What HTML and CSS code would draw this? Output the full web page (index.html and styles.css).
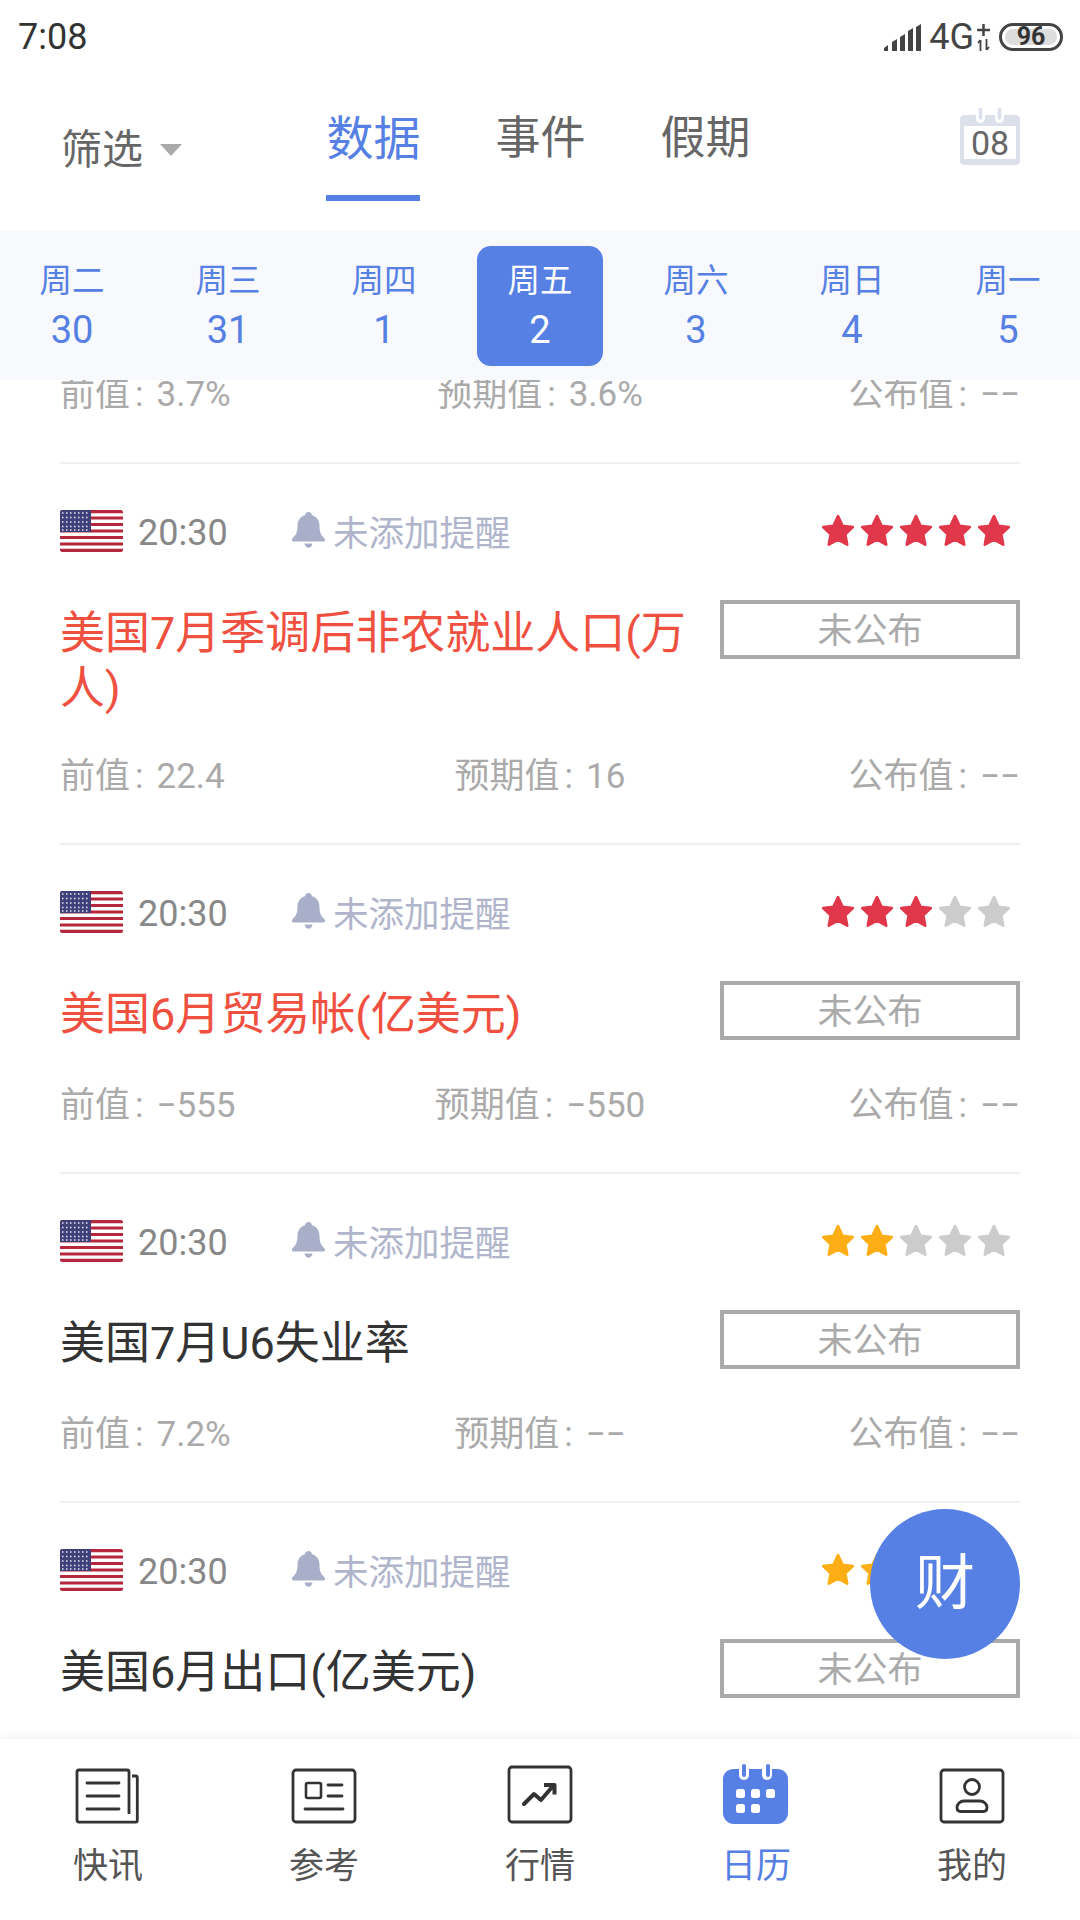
FILE: index.html
```html
<!DOCTYPE html>
<html lang="zh-CN">
<head>
  <meta charset="UTF-8" />
  <meta name="viewport" content="width=device-width, initial-scale=1.0" />
  <title>财经日历</title>
  <link rel="stylesheet" href="styles.css">
</head>
<body>
  <svg class="defs" width="0" height="0">
    <symbol id="star" viewBox="0 0 34 34">
      <path d="M17 3l4.300 9 9.700 1.300-7.100 6.800 1.800 9.800-8.700-4.800-8.700 4.800 1.800-9.800L3 13.300l9.700-1.300z" fill="currentColor" stroke="currentColor" stroke-width="2.500" stroke-linejoin="round"/>
    </symbol>
    <symbol id="bell" viewBox="0 0 33 36">
      <path d="M16.500 0c2 0 3.300 1.300 3.500 3.200 4.700 1.300 7.500 5.300 7.500 10.300 0 5 .6 8.500 3.700 11.500 1.700 1.600 2.200 2.200 1.700 3.400-.3.800-1 1.100-2 1.100H2c-1 0-1.700-.3-2-1.100-.5-1.200 0-1.800 1.700-3.400 3.100-3 3.800-6.500 3.800-11.500S8.300 4.500 13 3.200C13.200 1.300 14.500 0 16.500 0z" fill="currentColor"/>
      <path d="M12.500 31.500h8c-.4 2.700-2 4.200-4 4.200s-3.600-1.500-4-4.200z" fill="currentColor"/>
    </symbol>
    <symbol id="flag" viewBox="0 0 63 42">
      <clipPath id="flag-clip"><rect width="63" height="42" rx="2.500"/></clipPath>
      <g clip-path="url(#flag-clip)">
        <rect width="63" height="42" fill="#fff"/>
        <path d="M0 1.600h63M0 8h63M0 14.500h63M0 21h63M0 27.500h63M0 34h63M0 40.400h63" stroke="#b5273d" stroke-width="3.200"/>
        <rect width="31" height="22" fill="#3f4079"/>
        <path d="M2 3h28M2 7.500h28M2 12h28M2 16.500h28M2 20h28" stroke="#e6e7f2" stroke-width="1.500" stroke-dasharray="1.500 2.500"/>
      </g>
    </symbol>
  </svg>

  <div class="page">
    <div class="statusbar">
      <span class="clock">7:08</span>
      <div class="status-right">
        <svg class="signal" width="38" height="27" viewBox="0 0 38 27">
          <path d="M0 27v-3l4-3v6zM8 27v-9l5-3v12zM16 27V13l5-3v17zM24 27V7l5-3v23zM32 27V3l5-3v27z" fill="#444"/>
        </svg>
        <span class="net">4G</span>
        <svg class="updown" width="13" height="27" viewBox="0 0 13 27">
          <path d="M6.500 0v12M0 6h13" stroke="#444" stroke-width="2.500"/>
          <path d="M3.500 27V16M1 19l2.500-3M9.500 15v11M12 23l-2.500 3" stroke="#444" stroke-width="1.800" fill="none"/>
        </svg>
        <div class="battery"><span class="battery-fill">96</span></div>
      </div>
    </div>

    <header class="topbar">
      <div class="filter">筛选<i class="caret"></i></div>
      <nav class="tabs">
        <a class="tab active">数据</a>
        <a class="tab">事件</a>
        <a class="tab">假期</a>
      </nav>
      <svg class="cal-btn" width="60" height="57" viewBox="0 0 60 57">
        <path d="M4 7h12v3c0 3 2 5 4.500 5S25 13 25 10V7h10v3c0 3 2 5 4.500 5S44 13 44 10V7h12c2 0 4 2 4 4v42c0 2-2 4-4 4H4c-2 0-4-2-4-4V11c0-2 2-4 4-4z" fill="#dbe0ea"/>
        <path d="M20.500 0v10M39.500 0v10" stroke="#dbe0ea" stroke-width="3.500" stroke-linecap="round"/>
        <rect x="4" y="18" width="52" height="33" fill="#fff"/>
        <text x="30" y="47" text-anchor="middle" class="cal-num">08</text>
      </svg>
    </header>

    <div class="week">
      <div class="day"><span class="day-name">周二</span><span class="day-num">30</span></div>
      <div class="day"><span class="day-name">周三</span><span class="day-num">31</span></div>
      <div class="day"><span class="day-name">周四</span><span class="day-num">1</span></div>
      <div class="day selected"><span class="day-name">周五</span><span class="day-num">2</span></div>
      <div class="day"><span class="day-name">周六</span><span class="day-num">3</span></div>
      <div class="day"><span class="day-name">周日</span><span class="day-num">4</span></div>
      <div class="day"><span class="day-name">周一</span><span class="day-num">5</span></div>
    </div>

    <main class="list">
      <section class="row cut">
        <div class="values">
          <span>前值<i>:</i>3.7%</span><span>预期值<i>:</i>3.6%</span><span>公布值<i>:</i>−−</span>
        </div>
      </section>

      <section class="row">
        <div class="meta">
          <svg class="flag"><use href="#flag"/></svg>
          <span class="time">20:30</span>
          <span class="remind"><svg class="bell"><use href="#bell"/></svg>未添加提醒</span>
          <span class="stars red">
            <svg><use href="#star"/></svg><svg><use href="#star"/></svg><svg><use href="#star"/></svg><svg><use href="#star"/></svg><svg><use href="#star"/></svg>
          </span>
        </div>
        <div class="head">
          <h3 class="title hot">美国7月季调后非农就业人口(万人)</h3>
          <div class="pending">未公布</div>
        </div>
        <div class="values">
          <span>前值<i>:</i>22.4</span><span>预期值<i>:</i>16</span><span>公布值<i>:</i>−−</span>
        </div>
      </section>

      <section class="row">
        <div class="meta">
          <svg class="flag"><use href="#flag"/></svg>
          <span class="time">20:30</span>
          <span class="remind"><svg class="bell"><use href="#bell"/></svg>未添加提醒</span>
          <span class="stars red">
            <svg><use href="#star"/></svg><svg><use href="#star"/></svg><svg><use href="#star"/></svg><svg class="off"><use href="#star"/></svg><svg class="off"><use href="#star"/></svg>
          </span>
        </div>
        <div class="head">
          <h3 class="title hot">美国6月贸易帐(亿美元)</h3>
          <div class="pending">未公布</div>
        </div>
        <div class="values">
          <span>前值<i>:</i>−555</span><span>预期值<i>:</i>−550</span><span>公布值<i>:</i>−−</span>
        </div>
      </section>

      <section class="row">
        <div class="meta">
          <svg class="flag"><use href="#flag"/></svg>
          <span class="time">20:30</span>
          <span class="remind"><svg class="bell"><use href="#bell"/></svg>未添加提醒</span>
          <span class="stars orange">
            <svg><use href="#star"/></svg><svg><use href="#star"/></svg><svg class="off"><use href="#star"/></svg><svg class="off"><use href="#star"/></svg><svg class="off"><use href="#star"/></svg>
          </span>
        </div>
        <div class="head">
          <h3 class="title">美国7月U6失业率</h3>
          <div class="pending">未公布</div>
        </div>
        <div class="values">
          <span>前值<i>:</i>7.2%</span><span>预期值<i>:</i>−−</span><span>公布值<i>:</i>−−</span>
        </div>
      </section>

      <section class="row">
        <div class="meta">
          <svg class="flag"><use href="#flag"/></svg>
          <span class="time">20:30</span>
          <span class="remind"><svg class="bell"><use href="#bell"/></svg>未添加提醒</span>
          <span class="stars orange">
            <svg><use href="#star"/></svg><svg><use href="#star"/></svg><svg class="off"><use href="#star"/></svg><svg class="off"><use href="#star"/></svg><svg class="off"><use href="#star"/></svg>
          </span>
        </div>
        <div class="head">
          <h3 class="title">美国6月出口(亿美元)</h3>
          <div class="pending">未公布</div>
        </div>
      </section>
    </main>

    <div class="fab">财</div>

    <footer class="tabbar">
      <a class="nav-item">
        <svg width="66" height="56" viewBox="0 0 66 56" class="nav-icon">
          <path d="M57 8h3.500c1.200 0 1.800.6 1.800 1.800v42.700c0 1-.6 1.600-1.600 1.600H4c-1.200 0-2-.8-2-2V4c0-1.200.8-2 2-2h48c1.200 0 2 .8 2 2v42" fill="none" stroke="#333" stroke-width="2.800" stroke-linejoin="round"/>
          <path d="M12 15h32M12 28h32M12 41h32" stroke="#333" stroke-width="2.800" stroke-linecap="round"/>
        </svg>
        <span>快讯</span>
      </a>
      <a class="nav-item">
        <svg width="66" height="56" viewBox="0 0 66 56" class="nav-icon">
          <rect x="2" y="2" width="62" height="52" rx="3" fill="none" stroke="#333" stroke-width="2.800"/>
          <rect x="15" y="15" width="15" height="15" rx="1.500" fill="none" stroke="#333" stroke-width="2.600"/>
          <path d="M37 17h14M37 28h14M14 41h38" stroke="#333" stroke-width="2.800" stroke-linecap="round"/>
        </svg>
        <span>参考</span>
      </a>
      <a class="nav-item">
        <svg width="66" height="59" viewBox="0 0 66 59" class="nav-icon tall">
          <rect x="2" y="2" width="62" height="55" rx="3" fill="none" stroke="#333" stroke-width="2.800"/>
          <path d="M17 39l10-10 7 6 12-14" fill="none" stroke="#333" stroke-width="4" stroke-linecap="round" stroke-linejoin="round"/>
          <path d="M37 20h10.500v9.500" fill="none" stroke="#333" stroke-width="4" stroke-linejoin="round"/>
        </svg>
        <span>行情</span>
      </a>
      <a class="nav-item active">
        <svg width="66" height="60" viewBox="0 0 66 60" class="nav-icon taller">
          <path d="M11 5h5v5c0 4 2 6 5 6s5-2 5-6V5h13v5c0 4 2 6 5 6s5-2 5-6V5h5c6 0 11 4 11 10v34c0 6-5 11-11 11H11C5 60 0 55 0 49V15C0 9 5 5 11 5z" fill="#5680e4"/>
          <path d="M21 2v9M45 2v9" stroke="#5680e4" stroke-width="4" stroke-linecap="round"/>
          <g fill="#fff">
            <rect x="13" y="25" width="9" height="9" rx="2.500"/><rect x="28" y="25" width="9" height="9" rx="2.500"/><rect x="43" y="25" width="9" height="9" rx="2.500"/>
            <rect x="13" y="40" width="9" height="9" rx="2.500"/><rect x="28" y="40" width="9" height="9" rx="2.500"/>
          </g>
        </svg>
        <span>日历</span>
      </a>
      <a class="nav-item">
        <svg width="66" height="56" viewBox="0 0 66 56" class="nav-icon">
          <rect x="2" y="2" width="62" height="52" rx="3" fill="none" stroke="#333" stroke-width="2.800"/>
          <circle cx="33" cy="19" r="7.500" fill="none" stroke="#333" stroke-width="2.800"/>
          <path d="M25 33h16c4 0 7 3 7 6.500 0 2.500-1.500 4-3.500 4h-23c-2 0-3.500-1.500-3.500-4C18 36 21 33 25 33z" fill="none" stroke="#333" stroke-width="2.800"/>
        </svg>
        <span>我的</span>
      </a>
    </footer>
  </div>
</body>
</html>
```

FILE: styles.css
```css
:root {
  --blue: #5680e4;
  --grey: #aaaaaa;
  --font: Roboto, "Noto Sans CJK SC", sans-serif;
}

* {
  box-sizing: border-box;
}

body {
  margin: 0;
  background: #fff;
  font-family: var(--font);
  color: #333;
}

.defs {
  position: absolute;
}

.page {
  position: relative;
  width: 1080px;
  height: 1920px;
  display: flex;
  flex-direction: column;
  overflow: hidden;
}

/* status bar */
.statusbar {
  height: 74px;
  padding: 0 17px 0 18px;
  display: flex;
  align-items: center;
  justify-content: space-between;
}

.clock {
  font-size: 36px;
  color: #333;
}

.status-right {
  display: flex;
  align-items: center;
}

.net {
  margin-left: 7px;
  font-size: 36px;
  color: #444;
}

.updown {
  margin: 0 9px 0 3px;
}

.battery {
  width: 64px;
  height: 28px;
  padding: 3px;
  border: 3px solid #444;
  border-radius: 14px;
  display: flex;
}

.battery-fill {
  flex: 1;
  background: #dddddd;
  border-radius: 9px;
  font-size: 25px;
  line-height: 16px;
  font-weight: 700;
  text-align: center;
  color: #333;
}

/* top tabs */
.topbar {
  position: relative;
  height: 157px;
  display: flex;
  justify-content: center;
}

.filter {
  position: absolute;
  left: 61px;
  top: 52px;
  font-size: 41px;
  line-height: 48px;
  color: #666;
  display: flex;
  align-items: center;
}

.caret {
  margin-left: 17px;
  border-left: 11px solid transparent;
  border-right: 11px solid transparent;
  border-top: 12px solid #aaa;
}

.tabs {
  display: flex;
  gap: 75px;
  margin-left: -3px;
}

.tab {
  height: 127px;
  padding-top: 35px;
  font-size: 45px;
  line-height: 60px;
  color: #666;
}

.tab.active {
  width: 94px;
  font-size: 47px;
  color: var(--blue);
  border-bottom: 6px solid var(--blue);
}

.cal-btn {
  position: absolute;
  right: 60px;
  top: 34px;
}

.cal-num {
  font-family: var(--font);
  font-size: 34px;
  fill: #666;
}

/* week strip */
.week {
  height: 149px;
  background: #f7f9fd;
  display: grid;
  grid-template-columns: repeat(7, 156px);
  justify-content: center;
  position: relative;
  z-index: 1;
}

.day {
  width: 126px;
  height: 120px;
  margin: 15px auto 0;
  border-radius: 14px;
  display: flex;
  flex-direction: column;
  align-items: center;
  padding-top: 15px;
  color: var(--blue);
}

.day.selected {
  background: var(--blue);
  color: #fff;
}

.day-name {
  font-size: 32.500px;
  line-height: 40px;
}

.day-num {
  margin-top: 9px;
  font-size: 38px;
  line-height: 40px;
}

/* event list */
.list {
  flex: 1;
  min-height: 0;
  overflow: hidden;
  padding: 0 60px;
}

.row {
  padding: 48px 0 46px;
  border-bottom: 2px solid #f0f0f0;
}

.row.cut {
  margin-top: -5px;
  padding: 0 0 47px;
}

.meta {
  height: 42px;
  display: flex;
  align-items: center;
}

.flag {
  width: 63px;
  height: 42px;
  margin-bottom: 5px;
}

.time {
  margin-left: 15px;
  width: 154px;
  font-size: 36px;
  color: #888;
}

.remind {
  display: flex;
  align-items: center;
  padding-bottom: 6px;
  font-size: 35.500px;
  color: #b0b5cc;
}

.bell {
  width: 33px;
  height: 36px;
  margin-right: 8px;
  color: #a9afc9;
}

.stars {
  margin-left: auto;
  margin-right: 8px;
  padding-bottom: 4px;
  display: flex;
  gap: 3px;
}

.stars svg {
  width: 36px;
  height: 36px;
}

.stars.red svg {
  color: #e0384a;
}

.stars.orange svg {
  color: #fdae15;
}

.stars svg.off {
  color: #cccccc;
}

.head {
  margin-top: 46px;
  min-height: 62px;
  display: flex;
  align-items: flex-start;
  justify-content: space-between;
}

.title {
  width: 640px;
  margin: 0 0 -2px;
  padding-top: 6px;
  font-size: 45px;
  line-height: 55px;
  font-weight: 400;
  color: #333;
}

.title.hot {
  color: #f0503f;
}

.pending {
  width: 300px;
  height: 59px;
  border: 4px solid var(--grey);
  font-size: 35px;
  line-height: 56px;
  text-align: center;
  color: var(--grey);
  overflow: hidden;
}

.values {
  margin-top: 43px;
  height: 40px;
  display: grid;
  grid-template-columns: 1fr auto 1fr;
  font-size: 35px;
  line-height: 40px;
  color: var(--grey);
}

.values i {
  font-style: normal;
  margin: 0 13px 0 5px;
}

.row.cut .values {
  margin-top: 0;
}

.values span:last-child {
  text-align: right;
}

/* floating button */
.fab {
  position: absolute;
  left: 870px;
  top: 1509px;
  width: 150px;
  height: 150px;
  border-radius: 50%;
  background: var(--blue);
  color: #fff;
  font-size: 60px;
  line-height: 150px;
  text-align: center;
  z-index: 2;
}

/* bottom nav */
.tabbar {
  height: 181px;
  background: #fff;
  box-shadow: 0 -2px 8px rgba(0, 0, 0, 0.06);
  display: grid;
  grid-template-columns: repeat(5, 216px);
  position: relative;
  z-index: 1;
}

.nav-item {
  display: flex;
  flex-direction: column;
  align-items: center;
  padding-top: 29px;
  font-size: 35px;
  line-height: 44px;
  color: #555;
}

.nav-item span {
  margin-top: 21px;
}

.nav-item.active {
  color: var(--blue);
}

.nav-icon {
  display: block;
}

.nav-icon.tall {
  margin-top: -3px;
}

.nav-icon.taller {
  margin-top: -4px;
}
```
